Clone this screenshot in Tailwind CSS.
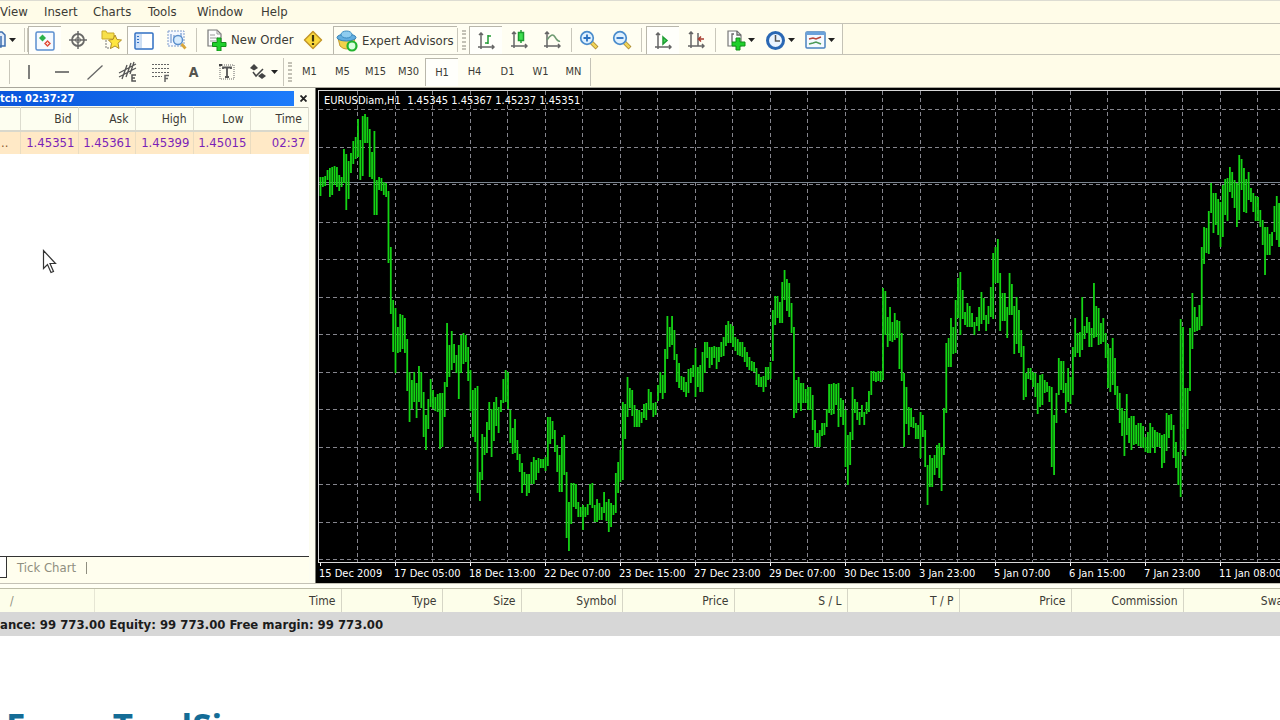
<!DOCTYPE html>
<html lang="en">
<head>
  <meta charset="UTF-8">
  <title>EURUSDiam,H1</title>
  <script src="https://cdn.jsdelivr.net/npm/@tailwindcss/browser@4"></script>
  <meta name="viewport" content="width=device-width, initial-scale=1.0">
</head>
<body class="bg-white h-screen flex flex-col overflow-hidden text-[12px] leading-4 text-[#3c3b35] font-['DejaVu_Sans_Condensed','DejaVu_Sans',sans-serif]">

  <!-- Menu -->
  <nav class="h-6 shrink-0 flex items-center bg-[#fffce8] border-t border-b border-t-[#dddcd2] border-b-[#c4c2b6] text-[13px] whitespace-nowrap">
    <a href="#" class="w-11">View</a>
    <a href="#" class="w-[49px]">Insert</a>
    <a href="#" class="w-[55px]">Charts</a>
    <a href="#" class="w-[49px]">Tools</a>
    <a href="#" class="w-16">Window</a>
    <a href="#">Help</a>
  </nav>

  <!-- Standard toolbar -->
  <div class="h-[31px] shrink-0 flex bg-[#fffce8] border-b border-[#c4c2b6] text-[13px]">
    <div class="flex items-center pt-0.5 bg-[#fffef2] border-r border-[#c4c2b6] whitespace-nowrap">
      <button class="w-6 h-7 flex items-center" aria-label="Profiles">
        <svg width="20" height="24" viewBox="0 0 20 24"><path d="M-3 4h5l3 3v11h-8" fill="#e4eefb" stroke="#3f70b0" stroke-width="1.5"/><path d="M1 8v11h-4" fill="none" stroke="#3f70b0" stroke-width="1.5"/><path d="M9 10h7l-3.500 4z" fill="#222"/></svg>
      </button>
      <div class="w-1 h-6 border-l border-r border-[#c9c7bb]"></div>
      <button class="w-[33px] h-7 flex items-center justify-center border-l border-t border-[#b9b7ab] bg-white/70" aria-label="Market Watch">
        <svg width="20" height="20" viewBox="0 0 20 20"><rect x="1" y="1" width="18" height="18" rx="1.500" fill="#f6faff" stroke="#5b8fd0" stroke-width="1.500"/><path d="M7.500 3.500l3.500 3.500-3.500 3.500-3.500-3.500z" fill="#2db34a"/><path d="M12.500 9l3.500 3.500-3.500 3.500-3.500-3.500z" fill="#e0503c"/><path d="M12.500 11v3M11 12.500h3" stroke="#fbd5cc"/></svg>
      </button>
      <button class="w-[33px] h-7 flex items-center justify-center" aria-label="Data Window">
        <svg width="20" height="20" viewBox="0 0 20 20" fill="none" stroke="#6a6a68"><circle cx="10" cy="10" r="6" stroke-width="1.800"/><circle cx="10" cy="10" r="2.500"/><path d="M10 1v18M1 10h18" stroke-width="1.500"/></svg>
      </button>
      <button class="w-[33px] h-7 flex items-center justify-center" aria-label="Navigator">
        <svg width="22" height="22" viewBox="0 0 22 22"><path d="M2 2h4l1 2h7v6H2z" fill="#f7e04a" stroke="#c9a92c"/><path d="M6 11v8h5" fill="none" stroke="#777" stroke-dasharray="2 1"/><path d="M15 6l2 4.500 4.500.500-3.500 3.200 1 5.300-4-2.500-4.500 2.500 1-5.300-3-3.200 4.500-.500z" fill="#ffe63f" stroke="#b08d28"/></svg>
      </button>
      <button class="w-[33px] h-7 flex items-center justify-center border-l border-t border-[#b9b7ab] bg-white/70" aria-label="Terminal">
        <svg width="20" height="18" viewBox="0 0 20 18"><rect x="1" y="1" width="18" height="16" rx="1" fill="#fff" stroke="#2f6fc4" stroke-width="1.500"/><rect x="2" y="2" width="4" height="14" fill="#cfe2fb"/><path d="M7 2v14" stroke="#9cbfe8"/><path d="M4 4v9" stroke="#2f6fc4" stroke-dasharray="1 2" stroke-width="2"/></svg>
      </button>
      <button class="w-[33px] h-7 flex items-center justify-center" aria-label="Strategy Tester">
        <svg width="22" height="22" viewBox="0 0 22 22"><rect x="2" y="2" width="16" height="15" fill="#f4f8ff" stroke="#7f9ccb" stroke-dasharray="2 1"/><path d="M5 5v9M8 6v3M15 4v4" stroke="#5b86c2"/><circle cx="12" cy="11" r="4.500" fill="#d8ecfd" stroke="#5b90cc" stroke-width="1.500"/><path d="M15.500 15l4 4.500" stroke="#d8a63a" stroke-width="2.800"/></svg>
      </button>
      <div class="w-1 h-6 border-r border-[#c9c7bb]"></div>
      <button class="w-[99px] h-7 flex items-center gap-1 pl-2" aria-label="New Order">
        <svg class="shrink-0" width="22" height="22" viewBox="0 0 22 22"><path d="M3 1h9l4 4v12H3z" fill="#fdfdfd" stroke="#777" stroke-width="1.200"/><path d="M12 1v4h4M5 6h5M5 9h8M5 12h6" fill="none" stroke="#999"/><path d="M12 9h4v4.500h5v4h-5V22h-4v-4.500H7.500v-4H12z" fill="#1fd02a" stroke="#129018"/></svg>
        New Order
      </button>
      <button class="w-[33px] h-7 flex items-center justify-center" aria-label="Alert">
        <svg width="20" height="20" viewBox="0 0 20 20"><path d="M10 1.500l8.500 8.500-8.500 8.500-8.500-8.500z" fill="#fbd93c" stroke="#c3962a" stroke-width="1.500" stroke-linejoin="round"/><path d="M10 5v6.500M10 13v2" stroke="#40350e" stroke-width="2.200"/></svg>
      </button>
      <button class="w-[124px] h-7 ml-1 flex items-center gap-1 pl-0.5 border-l border-t border-[#b9b7ab]">
        <svg class="shrink-0" width="22" height="22" viewBox="0 0 22 22"><path d="M2 8l2 8q6 6 13 0l2-8z" fill="#f3d24a" stroke="#c19a30"/><ellipse cx="10.500" cy="7.500" rx="9.500" ry="3.500" fill="#62aee0" stroke="#2f7db4"/><ellipse cx="10.500" cy="4.500" rx="5.500" ry="3.500" fill="#8fcdf0" stroke="#3d8dc0"/><circle cx="16" cy="16" r="4.500" fill="#d9ffdc" stroke="#22b42e" stroke-width="2.200"/></svg>
        Expert Advisors
      </button>
      <div class="w-3 h-6 border-l border-[#c9c7bb] flex justify-center items-center">
        <div class="w-1 h-5 border-l-2 border-r-2 border-dotted border-[#c4c2b6]"></div>
      </div>
      <button class="w-[33px] h-7 flex items-center justify-center border-l border-t border-[#b9b7ab] bg-white/70" aria-label="Bar Chart">
        <svg width="18" height="18" viewBox="0 0 18 18" fill="none" stroke="#666" stroke-width="1.500"><path d="M4 1v16M1 15h16M2 3l2-2 2 2M15 13l2 2-2 2"/><path d="M11 3v9M11 4h3M8 11h3" stroke="#239c36"/></svg>
      </button>
      <button class="w-[33px] h-7 flex items-center justify-center" aria-label="Candlesticks">
        <svg width="18" height="20" viewBox="0 0 18 20" fill="none" stroke="#666" stroke-width="1.500"><path d="M4 2v16M1 16h16M2 4l2-2 2 2M15 14l2 2-2 2"/><path d="M11 0v13" stroke="#239c36"/><rect x="8.500" y="2.500" width="5" height="8" fill="#3fe050" stroke="#1d9c2f"/></svg>
      </button>
      <button class="w-[33px] h-7 flex items-center justify-center" aria-label="Line Chart">
        <svg width="18" height="18" viewBox="0 0 18 18" fill="none" stroke="#666" stroke-width="1.500"><path d="M4 1v16M1 15h16M2 3l2-2 2 2M15 13l2 2-2 2"/><path d="M4 9q5-8 8-3t5 4" stroke="#6f9a72"/></svg>
      </button>
      <div class="w-1 h-6 border-r border-[#c9c7bb]"></div>
      <button class="w-[33px] h-7 flex items-center justify-center" aria-label="Zoom In">
        <svg width="20" height="20" viewBox="0 0 20 20" fill="none"><path d="M12 12l6 6" stroke="#a8862c" stroke-width="4"/><path d="M12.500 12.500l5 5" stroke="#f0d45a" stroke-width="2.500"/><circle cx="8" cy="8" r="6.300" fill="#dff1ff" stroke="#4a8ccc" stroke-width="1.700"/><path d="M8 4.500v7M4.500 8h7" stroke="#2a70c0" stroke-width="1.800"/></svg>
      </button>
      <button class="w-[33px] h-7 flex items-center justify-center" aria-label="Zoom Out">
        <svg width="20" height="20" viewBox="0 0 20 20" fill="none"><path d="M12 12l6 6" stroke="#a8862c" stroke-width="4"/><path d="M12.500 12.500l5 5" stroke="#f0d45a" stroke-width="2.500"/><circle cx="8" cy="8" r="6.300" fill="#dff1ff" stroke="#4a8ccc" stroke-width="1.700"/><path d="M4.500 8h7" stroke="#2a70c0" stroke-width="1.800"/></svg>
      </button>
      <div class="w-1 h-6 border-r border-[#c9c7bb]"></div>
      <button class="w-[33px] h-7 ml-1 flex items-center justify-center border-l border-t border-[#b9b7ab] bg-white/70" aria-label="Auto Scroll">
        <svg width="18" height="18" viewBox="0 0 18 18" fill="none" stroke="#666" stroke-width="1.500"><path d="M4 1v16M1 15h16M2 3l2-2 2 2M15 13l2 2-2 2"/><path d="M9 5l4 3.500-4 3.500z" fill="#43d957" stroke="#1f9c33"/></svg>
      </button>
      <button class="w-[33px] h-7 flex items-center justify-center" aria-label="Chart Shift">
        <svg width="18" height="18" viewBox="0 0 18 18" fill="none" stroke="#666" stroke-width="1.500"><path d="M4 1v16M1 15h16M2 3l2-2 2 2M15 13l2 2-2 2M11 2v13"/><path d="M11 8h6M14 5.500l-2.500 2.500 2.500 2.500" stroke="#a83c30"/></svg>
      </button>
      <div class="w-1 h-6 border-r border-[#c9c7bb]"></div>
      <button class="w-10 h-7 ml-1 flex items-center justify-center gap-0.5" aria-label="Indicators">
        <svg width="20" height="22" viewBox="0 0 20 22"><path d="M2 2h9l4 4v11H2z" fill="#fdfdfd" stroke="#777" stroke-width="1.200"/><path d="M8 5H6v8M11 2v4h4" fill="none" stroke="#666" stroke-width="1.300"/><path d="M10 9h4v4h5v4h-5v4h-4v-4H6v-4h4z" fill="#1fd02a" stroke="#129018"/></svg>
        <svg width="7" height="5" viewBox="0 0 7 5"><path d="M0 0h7l-3.500 4z" fill="#222"/></svg>
      </button>
      <button class="w-10 h-7 flex items-center justify-center gap-0.5" aria-label="Periods">
        <svg width="21" height="21" viewBox="0 0 21 21"><circle cx="10.500" cy="10.500" r="8" fill="#eaf4ff" stroke="#2a68b4" stroke-width="3"/><path d="M10.500 5v6h4.500" fill="none" stroke="#555" stroke-width="1.500"/></svg>
        <svg width="7" height="5" viewBox="0 0 7 5"><path d="M0 0h7l-3.500 4z" fill="#222"/></svg>
      </button>
      <button class="w-[42px] h-7 pr-0.5 flex items-center justify-center gap-0.5" aria-label="Templates">
        <svg width="21" height="18" viewBox="0 0 21 18"><rect x="1" y="1" width="19" height="16" rx="1" fill="#f5faff" stroke="#4a82c0" stroke-width="1.500"/><path d="M1 2.500h19" stroke="#6ba2da" stroke-width="3"/><path d="M4 8l4-1 3 1 5-2" fill="none" stroke="#b8463a" stroke-width="1.500"/><path d="M4 13l4-1 3-1 5 2" fill="none" stroke="#4b9a58" stroke-width="1.500"/></svg>
        <svg width="7" height="5" viewBox="0 0 7 5"><path d="M0 0h7l-3.500 4z" fill="#222"/></svg>
      </button>
    </div>
  </div>

  <!-- Line studies + periods -->
  <div class="h-8 shrink-0 flex bg-[#fffce8]">
    <div class="flex items-center pt-0.5 bg-[#fffef2]">
      <div class="w-3 h-6 flex justify-end pr-0.5"><div class="border-r border-[#c9c7bb]"></div></div>
      <button class="w-[33px] h-7 flex items-center justify-center" aria-label="Vertical Line">
        <svg width="20" height="20" viewBox="0 0 20 20"><path d="M10 3v14" stroke="#555" stroke-width="1.500"/></svg>
      </button>
      <button class="w-[33px] h-7 flex items-center justify-center" aria-label="Horizontal Line">
        <svg width="20" height="20" viewBox="0 0 20 20"><path d="M3 10h14" stroke="#555" stroke-width="1.500"/></svg>
      </button>
      <button class="w-[33px] h-7 flex items-center justify-center" aria-label="Trendline">
        <svg width="20" height="20" viewBox="0 0 20 20"><path d="M2.500 17.500l15-14" stroke="#666" stroke-width="1.300"/></svg>
      </button>
      <button class="w-[33px] h-7 flex items-center justify-center" aria-label="Equidistant Channel">
        <svg width="20" height="22" viewBox="0 0 20 22" fill="none" stroke="#555"><path d="M1 12L18 3M1 16L18 7M4 18l5-14M8 16l5-14M12 13l4-12" stroke-width="1.300"/><path d="M18 14h-4v6h4M14 17h3" stroke-width="1.500"/></svg>
      </button>
      <button class="w-[33px] h-7 flex items-center justify-center" aria-label="Fibonacci Retracement">
        <svg width="20" height="22" viewBox="0 0 20 22" fill="none" stroke="#666"><path d="M1 3.500h17M1 7.500h17M1 11.500h17M1 15.500h10" stroke-dasharray="2 1"/><path d="M18 14.500h-4V21M14 17.500h3" stroke-width="1.500"/></svg>
      </button>
      <button class="w-[33px] h-7 flex items-center justify-center text-[14px] font-bold text-[#55544e]">A</button>
      <button class="w-[33px] h-7 flex items-center justify-center" aria-label="Text Label">
        <svg width="18" height="18" viewBox="0 0 18 18" fill="none" stroke="#666"><rect x="2" y="2" width="14" height="14" stroke-dasharray="1 1"/><path d="M5 6V4.500h8V6M9 5v9M7 14h4" stroke="#555" stroke-width="1.800"/><path d="M1 1h3v2H1z" fill="#444" stroke="none"/></svg>
      </button>
      <button class="w-10 h-7 flex items-center justify-center gap-0.5" aria-label="Arrows">
        <svg width="20" height="18" viewBox="0 0 20 18" fill="none" stroke="#444"><path d="M5 1l4 4-4 2.500L1 5z" fill="#444" stroke="none"/><path d="M4 9l3 4 7-7" stroke-width="1.500"/><path d="M13 16l-4-3 4-3 4 3z" fill="#444" stroke="none"/></svg>
        <svg width="7" height="5" viewBox="0 0 7 5"><path d="M0 0h7l-3.500 4z" fill="#222"/></svg>
      </button>
      <div class="w-[10px] h-7 border-l border-[#c9c7bb] flex items-center pl-1">
        <div class="w-1 h-5 border-l-2 border-r-2 border-dotted border-[#c4c2b6]"></div>
      </div>
      <div id="periods" class="flex border-r border-[#c4c2b6] text-[11px]"></div>
    </div>
  </div>

  <main class="flex-1 min-h-0 flex bg-[#fffeee] border-t border-[#a9a79c]">
    <!-- Market Watch -->
    <section class="w-[315px] shrink-0 flex flex-col pr-[6px] bg-[#fdfdf0]">
      <div class="h-[18px] flex items-center mt-px">
        <h2 class="flex-1 h-[15px] leading-[15px] bg-linear-to-r from-[#0a55dc] to-[#1d7cfb] text-white text-[11px] font-bold">tch: 02:37:27</h2>
        <button class="w-[15px] flex justify-center pl-1" aria-label="Close">
          <svg width="7" height="7" viewBox="0 0 7 7"><path d="M.5.500l6 6M6.500.500l-6 6" stroke="#222" stroke-width="1.800"/></svg>
        </button>
      </div>
      <div class="flex-1 bg-white border-b border-[#333]">
        <table class="w-full table-fixed text-right text-[13px]">
          <thead class="bg-[#fdfef0] text-[12px]">
            <tr class="h-[23px] border-t border-b-2 border-t-[#b8b8ac] border-b-[#d9d8cc]">
              <th class="w-[20px] border-r border-[#dcdccf]"></th>
              <th class="w-[58px] pr-[6px] font-normal border-r border-[#dcdccf]">Bid</th>
              <th class="w-[57px] pr-[6px] font-normal border-r border-[#dcdccf]">Ask</th>
              <th class="w-[58px] pr-[6px] font-normal border-r border-[#dcdccf]">High</th>
              <th class="w-[57px] pr-[6px] font-normal border-r border-[#dcdccf]">Low</th>
              <th class="pr-[6px] font-normal border-r border-[#dcdccf]">Time</th>
            </tr>
          </thead>
          <tbody class="bg-[#ffe9c6] text-[#7a1fb8]">
            <tr class="h-[23px]">
              <td class="pl-px text-left text-[#8a5a30] border-r border-[#eadcc0]">..</td>
              <td class="pr-[3px] border-r border-[#eadcc0]">1.45351</td>
              <td class="pr-[3px] border-r border-[#eadcc0]">1.45361</td>
              <td class="pr-[3px] border-r border-[#eadcc0]">1.45399</td>
              <td class="pr-[3px] border-r border-[#eadcc0]">1.45015</td>
              <td class="pr-[3px]">02:37</td>
            </tr>
          </tbody>
        </table>
      </div>
      <div class="h-[26px] flex bg-[#fffeee]">
        <div class="w-[7px] h-[21px] bg-white border-r border-b border-[#333]"></div>
        <button class="h-[21px] pl-[10px] pr-[10px] text-[13px] text-[#8f8e80]">Tick Chart</button>
        <div class="h-3 mt-[5px] border-l border-[#8f8e80]"></div>
      </div>
    </section>

    <!-- Chart -->
    <section class="flex-1 min-w-0 flex flex-col bg-black border-l border-[#77776f] text-white text-[11px]">
      <div class="flex-1 min-h-0 relative mt-[2px] ml-[2px] border-t border-l border-b border-[#d8d8d8]">
        <svg id="chart" class="block w-full h-full" role="img" aria-label="EURUSD hourly bars"></svg>
        <h1 class="absolute left-[5px] top-[2px] font-medium whitespace-pre">EURUSDiam,H1  1.45345 1.45367 1.45237 1.45351</h1>
      </div>
      <div id="dates" class="h-5 pl-[3px] flex overflow-hidden whitespace-nowrap"></div>
    </section>
  </main>

  <!-- Terminal -->
  <section class="h-[137px] shrink-0 overflow-hidden bg-white">
    <div class="h-[6px] bg-[#fffff4] border-t border-b border-t-[#c4c2b6] border-b-[#bdbda8]"></div>
    <table class="w-[1297px] table-fixed text-right">
      <thead class="bg-[#fdfeea]">
        <tr class="h-[23px]">
          <th class="w-[94px] pl-[10px] text-left font-normal text-[#8f8e80] border-r border-[#e6e6d4]">/</th>
          <th class="w-[247px] pr-[5px] font-normal border-r border-[#d6d6c6]">Time</th>
          <th class="w-[101px] pr-[5px] font-normal border-r border-[#d6d6c6]">Type</th>
          <th class="w-[79px] pr-[5px] font-normal border-r border-[#d6d6c6]">Size</th>
          <th class="w-[101px] pr-[5px] font-normal border-r border-[#d6d6c6]">Symbol</th>
          <th class="w-[112px] pr-[5px] font-normal border-r border-[#d6d6c6]">Price</th>
          <th class="w-[113px] pr-[5px] font-normal border-r border-[#d6d6c6]">S / L</th>
          <th class="w-[112px] pr-[5px] font-normal border-r border-[#d6d6c6]">T / P</th>
          <th class="w-[112px] pr-[5px] font-normal border-r border-[#d6d6c6]">Price</th>
          <th class="w-[112px] pr-[5px] font-normal border-r border-[#d6d6c6]">Commission</th>
          <th class="pr-[7px] font-normal">Swap</th>
        </tr>
      </thead>
      <tbody>
        <tr class="h-6 bg-[#d7d7d7] text-[#1c1c1c]">
          <td colspan="11" class="text-left text-[13px] font-bold">
            <div class="flex gap-1 pt-px"><span>ance: 99 773.00</span><span>Equity: 99 773.00</span><span>Free margin: 99 773.00</span></div>
          </td>
        </tr>
      </tbody>
    </table>
    <p class="mt-[67px] pl-[6px] text-[35px] leading-[48px] font-bold text-[#146c96] font-['Open_Sans',sans-serif]">Forex TradSi</p>
  </section>

  <!-- Mouse pointer -->
  <svg class="absolute left-[42px] top-[249px]" width="15" height="26" viewBox="0 0 15 26"><path d="M1.500 1.500v18l4-4 3.500 8 2.500-1-3.500-8h5.500z" fill="#fff" stroke="#333" stroke-width="1.200"/></svg>

  <script>
    const periods = ["M1", "M5", "M15", "M30", "H1", "H4", "D1", "W1", "MN"];
    document.getElementById("periods").innerHTML = periods.map(p => `
      <button class="w-[33px] h-7 ${p === "H1" ? "border-l border-t border-[#b9b7ab] bg-white/70" : ""}">${p}</button>`).join("");

    const dates = ["15 Dec 2009", "17 Dec 05:00", "18 Dec 13:00", "22 Dec 07:00", "23 Dec 15:00", "27 Dec 23:00",
      "29 Dec 07:00", "30 Dec 15:00", "3 Jan 23:00", "5 Jan 07:00", "6 Jan 15:00", "7 Jan 23:00", "11 Jan 08:00"];
    document.getElementById("dates").innerHTML = dates.map(d => `
      <div class="w-[75px] shrink-0 font-medium"><div class="h-[3px] ml-px border-l border-white"></div>${d}</div>`).join("");

    // top,bottom of every hourly bar
    const bars = `177,196 177,187 176,186 170,180 168,197 167,195 166,185 167,187 175,191 177,187 149,183 154,210 161,199 153,173 141,164 137,159
      119,157 140,180 116,176 114,143 117,143 129,177 152,179 131,215 180,215 177,190 178,191 182,195 183,197 191,263 247,314 300,352
      308,373 327,353 314,352 315,349 318,353 339,391 372,422 380,409 372,402 383,418 366,402 372,408 392,437 415,450 399,429 379,407
      390,409 397,411 394,412 393,449 393,447 382,417 323,387 345,377 331,370 344,363 355,373 345,399 335,373 333,364 335,362 347,381
      370,411 390,437 388,442 386,493 472,501 434,480 437,455 422,453 402,430 409,457 402,441 397,426 407,433 400,412 379,403 370,402
      372,409 410,443 428,454 419,453 440,460 454,472 463,493 472,485 474,496 474,493 462,484 457,484 460,480 458,473 459,468 459,468
      457,471 417,466 417,444 421,439 430,452 445,472 455,492 437,492 435,475 472,538 502,551 483,524 483,507 484,509 502,517 507,517
      505,530 507,517 504,515 484,505 483,508 505,522 499,522 503,520 507,520 492,513 502,521 499,532 503,527 505,515 473,513 462,493
      450,482 402,480 404,439 377,417 388,408 390,416 405,427 410,427 410,427 412,423 404,418 403,420 389,410 392,410 403,417 402,415
      385,401 372,393 375,399 349,393 316,359 327,347 316,345 330,360 354,382 363,388 376,390 377,392 382,397 369,393 368,383 365,377
      348,397 367,387 365,392 352,392 342,373 342,358 347,368 347,365 346,358 347,369 347,362 342,357 337,356 325,346 321,343 324,343
      326,347 337,351 339,355 342,356 342,357 347,362 352,367 357,370 361,371 362,372 368,385 374,387 377,387 376,392 367,387 367,380
      362,379 310,361 296,325 296,318 302,323 282,323 270,300 279,311 283,317 303,333 327,418 380,413 377,403 383,411 383,403 389,403
      387,410 387,410 395,430 420,447 433,447 430,447 423,436 423,435 409,427 384,413 384,415 383,414 384,405 383,427 398,417 400,425
      410,467 435,485 432,465 387,440 399,413 402,420 412,425 405,417 412,425 402,414 391,412 371,395 371,381 372,382 371,381 371,382
      288,380 291,335 317,347 307,341 322,342 313,340 320,338 321,369 333,381 373,447 387,424 407,435 408,427 417,428 423,439 425,439
      412,458 415,437 430,467 465,505 455,487 458,487 455,475 445,468 443,478 447,491 408,455 343,413 338,367 318,367 327,354 300,353
      278,318 272,335 290,319 312,325 303,327 306,327 313,327 322,335 317,326 307,331 292,324 298,320 315,331 306,324 287,317 253,319
      247,283 239,283 273,331 293,321 293,321 307,338 273,315 284,315 306,354 297,344 310,353 330,357 346,400 373,397 368,379 368,380
      372,387 373,397 383,414 375,407 374,405 380,393 382,392 386,402 387,467 415,475 393,423 358,395 361,390 361,393 383,413 368,402
      377,404 347,395 318,357 333,353 332,357 297,350 326,339 317,333 322,347 328,347 283,338 306,337 308,345 323,344 318,342 333,358
      344,388 348,392 338,385 358,395 386,409 393,423 408,436 411,456 394,435 418,443 416,450 416,445 425,444 423,446 423,447 426,448
      437,452 432,453 423,453 427,448 430,453 432,447 433,447 435,468 434,463 413,451 415,438 414,430 425,458 442,468 452,485 319,497
      327,450 388,456 388,429 328,391 293,349 307,332 317,331 305,330 247,326 227,264 228,253 211,254 183,213 193,233 193,225 199,235
      202,247 185,237 179,215 178,221 167,192 172,198 180,208 183,227 155,220 159,190 168,212 179,213 172,200 188,202 193,212 196,221
      197,221 210,227 220,245 227,275 227,255 234,255 232,246 206,232 196,240 203,247`.trim().split(/\s+/).map(b => b.split(",").map(Number));

    const TOP = 91;    // window y of the plot's first row
    const CELL = 37.5; // grid cell, 16 bars wide
    let svg = "";
    for (let k = 1; k < 60; k++) {
      const x = Math.floor(k * CELL) + 1.5;
      svg += `<line x1="${x}" x2="${x}" y1="0" y2="100%" stroke="#85858d" stroke-dasharray="4 3"/>`;
    }
    for (let k = 0; k < 13; k++) {
      const y = Math.floor(109.5 + k * CELL) - TOP + 0.5;
      svg += `<line x1="0" x2="100%" y1="${y}" y2="${y}" stroke="#85858d" stroke-dasharray="4 3"/>`;
    }
    svg += `<line x1="0" x2="100%" y1="91.5" y2="91.5" stroke="#7b8590"/>`;
    bars.forEach(([hi, lo], i) => {
      const x = (i * CELL / 16 + 1.5).toFixed(2);
      svg += `<line x1="${x}" x2="${x}" y1="${hi - TOP}" y2="${lo - TOP}" stroke="#14d414" stroke-width="1.8"/>`;
    });
    document.getElementById("chart").innerHTML = svg;
  </script>
</body>
</html>
